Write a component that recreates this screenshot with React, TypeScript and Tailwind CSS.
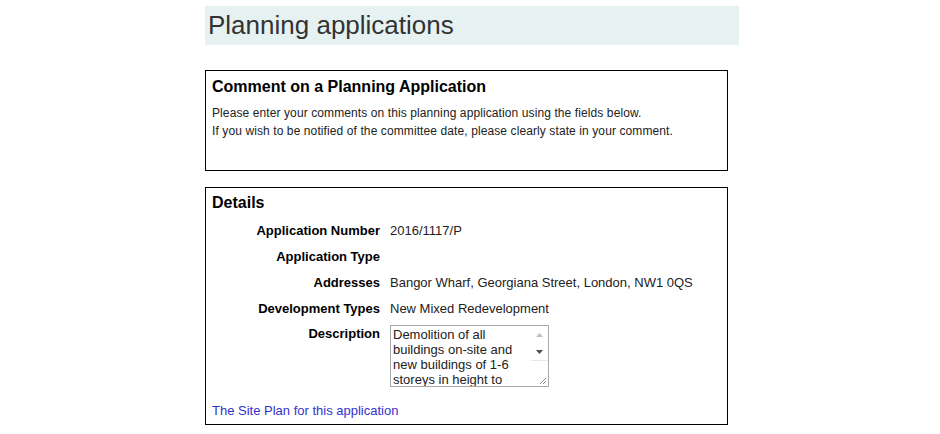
const rows = [
  { label: "Application Number", value: "2016/1117/P" },
  { label: "Application Type", value: "" },
  { label: "Addresses", value: "Bangor Wharf, Georgiana Street, London, NW1 0QS" },
  { label: "Development Types", value: "New Mixed Redevelopment" },
];

const description =
  "Demolition of all buildings on-site and new buildings of 1-6 storeys in height to provide a mixed use development";

const FakeTextarea = () => (
  <div className="flex w-[159px] h-[62px] border border-[#a9a9a9] bg-white">
    <div className="flex-1 overflow-hidden pl-[2px] pt-[1px] text-[13px] leading-[15px] text-[#222]">
      {description}
    </div>
    <div className="w-[17px] flex flex-col items-center bg-white">
      <div className="h-[17px] flex items-center justify-center">
        <svg width="7" height="4" viewBox="0 0 7 4">
          <path d="M0 4 L3.5 0 L7 4 Z" fill="#c1c1c1" />
        </svg>
      </div>
      <div className="h-[17px] flex items-center justify-center">
        <svg width="7" height="4" viewBox="0 0 7 4">
          <path d="M0 0 L3.5 4 L7 0 Z" fill="#505050" />
        </svg>
      </div>
      <div className="flex-1 w-full border-t border-[#e8e8e8] flex items-end justify-end pr-[2px] pb-[2px]">
        <svg width="7" height="7" viewBox="0 0 7 7">
          <path d="M1 7 L7 1 M4 7 L7 4" stroke="#8a8a8a" strokeWidth="1" />
        </svg>
      </div>
    </div>
  </div>
);

export default function App() {
  return (
    <div className="w-[940px] h-[434px] bg-white overflow-hidden font-['Liberation_Sans',Arial,sans-serif] text-black">
      <div className="ml-[205px] mt-[6px] w-[534px] h-[39px] bg-[#e6f2f2] pl-[3px] text-[26px] leading-[39px] text-[#333]">
        Planning applications
      </div>

      <div className="ml-[205px] mt-[25px] w-[523px] h-[101px] border border-black px-[6px] pt-[5px]">
        <h2 className="text-[16px] font-bold leading-[22px]">Comment on a Planning Application</h2>
        <div className="mt-[6px] text-[12px] leading-[18px] tracking-[0.1px] text-[#222]">
          <p>Please enter your comments on this planning application using the fields below.</p>
          <p>If you wish to be notified of the committee date, please clearly state in your comment.</p>
        </div>
      </div>

      <div className="ml-[205px] mt-[16px] w-[523px] h-[238px] border border-black px-[6px] pt-[4px]">
        <h2 className="text-[16px] font-bold leading-[22px]">Details</h2>
        <div className="mt-[4px] grid grid-cols-[168px_1fr] gap-x-[10px] text-[13px]">
          {rows.map((r) => (
            <div key={r.label} className="contents">
              <div className="h-[26px] leading-[26px] text-right font-bold">{r.label}</div>
              <div className="h-[26px] leading-[26px] text-[#222]">{r.value}</div>
            </div>
          ))}
          <div className="leading-[16px] pt-[4px] text-right font-bold">Description</div>
          <div className="pt-[3px]">
            <FakeTextarea />
          </div>
        </div>
        <a href="#" className="block mt-[16px] text-[13px] leading-[16px] text-[#3333cc]">
          The Site Plan for this application
        </a>
      </div>
    </div>
  );
}
